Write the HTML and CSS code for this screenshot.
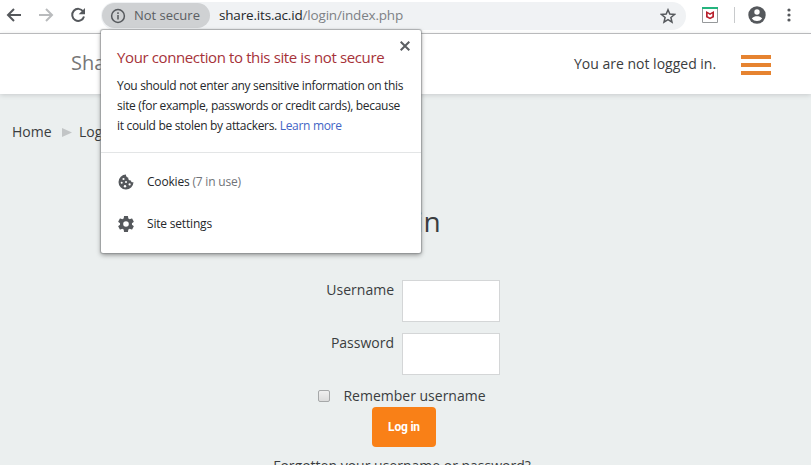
FILE: index.html
```html
<!DOCTYPE html>
<html lang="en">
<head>
<meta charset="utf-8">
<title>Log in</title>
<link rel="stylesheet" href="styles.css">
</head>
<body>
<div class="toolbar">
  <svg class="nav" viewBox="0 0 16 16"><path d="M15 8H2M8 2L2 8l6 6"/></svg>
  <svg class="nav forward" viewBox="0 0 16 16"><path d="M1 8h13M8 2l6 6-6 6"/></svg>
  <svg class="nav reload" viewBox="0 0 16 16"><path d="M13.2 4.5A6 6 0 1 0 14 9.5"/><path class="solid" d="M15 1v6.3H8.7z"/></svg>
  <div class="omnibox">
    <div class="chip">
      <svg class="info" viewBox="0 0 16 16"><circle cx="8" cy="8" r="6.4"/><path d="M8 7v4.5M8 4.2v1.7"/></svg>
      <span class="chip-text">Not secure</span>
    </div>
    <div class="url">share.its.ac.id<span class="path">/login/index.php</span></div>
    <svg class="star" viewBox="0 0 16 16"><path d="M8 1.8l1.8 4.3 4.7.4-3.6 3 1.1 4.6L8 11.7 4 14.1l1.1-4.6-3.6-3 4.7-.4z"/></svg>
  </div>
  <svg class="shield" viewBox="0 0 16 16"><path class="frame" d="M.5.5h15v15H.5z"/><path class="band" d="M0 0h16v2H0z"/><path class="mark" d="M4 4l4 2.3L12 4v6.2L8 12.3l-4-2.1zM5.7 6.4v2.9L8 10.5l2.3-1.2V6.4L8 7.9z"/></svg>
  <div class="divider"></div>
  <svg class="avatar" viewBox="0 0 18 18"><circle cx="9" cy="9" r="8.7"/><circle class="hole" cx="9" cy="6" r="2.7"/><path class="hole" d="M3.8 12.4C5 10.7 7.3 10.2 9 10.2s4 .5 5.2 2.2A6.3 6.3 0 0 1 9 15a6.3 6.3 0 0 1-5.200-2.600z"/></svg>
  <svg class="more" viewBox="0 0 4 14"><circle cx="2" cy="2" r="1.6"/><circle cx="2" cy="7" r="1.6"/><circle cx="2" cy="12" r="1.6"/></svg>
</div>
<header class="site-header">
  <div class="brand">Share</div>
  <div class="login-state">You are not logged in.</div>
  <div class="menu"><i></i><i></i><i></i></div>
</header>
<main>
  <nav class="crumbs"><span class="home">Home</span><svg class="arrow" viewBox="0 0 10 9"><path d="M0 0l10 4.500L0 9z"/></svg><span>Log in</span></nav>
  <h1>Log in</h1>
  <form class="login">
    <div class="row"><label class="user" for="u">Username</label><input id="u" class="field" type="text"></div>
    <div class="row"><label class="pass" for="p">Password</label><input id="p" class="field" type="password"></div>
    <div class="remember"><input id="r" class="check" type="checkbox"><label for="r">Remember username</label></div>
    <button type="button" class="submit">Log in</button>
    <div class="forgot">Forgotten your username or password?</div>
  </form>
</main>
<section class="popup">
  <svg class="close" viewBox="0 0 10 10"><path d="M.7.700l8.600 8.600M9.300.700L.700 9.300"/></svg>
  <div class="message">
    <h2>Your connection to this site is not secure</h2>
    <p>You should not enter any sensitive information on this<br>site (for example, passwords or credit cards), because<br>it could be stolen by attackers. <span class="link">Learn more</span></p>
  </div>
  <div class="options">
    <div class="option"><svg class="icon" viewBox="0 0 16 16"><path d="M8 .5A7.500 7.500 0 1 0 15.500 8.300c-1.500.300-2.500-.600-2.500-1.900-1.900.2-3-1-2.700-2.700C8.600 3.400 7.800 2.200 8 .5z"/><g class="hole"><circle cx="5.500" cy="5" r="1.100"/><circle cx="3.700" cy="8.700" r="1"/><circle cx="8" cy="8" r="1"/><circle cx="7" cy="12.300" r="1.200"/><circle cx="11.600" cy="10.400" r="1.100"/></g></svg><span>Cookies <span class="count">(7 in use)</span></span></div>
    <div class="option"><svg class="icon" viewBox="2 2 20 20"><path fill-rule="evenodd" d="M19.430 12.980c.040-.320.070-.640.070-.980s-.030-.660-.070-.980l2.110-1.650c.190-.150.240-.420.120-.640l-2-3.460c-.120-.220-.390-.300-.610-.220l-2.490 1c-.520-.400-1.080-.730-1.690-.980l-.380-2.650C14.460 2.180 14.250 2 14 2h-4c-.250 0-.460.180-.490.420l-.380 2.650c-.610.250-1.170.590-1.690.980l-2.490-1c-.230-.090-.490 0-.610.220l-2 3.460c-.130.220-.070.490.120.640l2.110 1.650c-.040.320-.070.650-.070.980s.030.660.070.980l-2.110 1.650c-.190.150-.240.420-.120.640l2 3.460c.120.220.390.300.610.220l2.490-1c.520.400 1.080.730 1.690.980l.380 2.650c.030.240.240.420.490.420h4c.250 0 .460-.180.490-.420l.380-2.650c.610-.250 1.170-.590 1.690-.980l2.490 1c.230.090.490 0 .610-.220l2-3.460c.120-.220.070-.490-.120-.640zM12 15.500a3.500 3.500 0 1 1 0-7 3.500 3.500 0 0 1 0 7z"/></svg><span>Site settings</span></div>
  </div>
</section>
</body>
</html>
```
FILE: styles.css
```css
* { box-sizing: border-box; }
body { margin: 0; width: 811px; height: 465px; overflow: hidden; position: relative; background: #ebefef; color: #3a3d40; font: 14px/20px "Open Sans", sans-serif; }
svg { display: block; flex: none; }
.toolbar { display: flex; align-items: center; height: 34px; padding: 0 0 4px 6px; background: #fff; border-bottom: 1px solid #b4b4b6; }
.nav { width: 16px; height: 16px; margin-right: 16px; fill: none; stroke: #55585c; stroke-width: 2; }
.forward { stroke: #b9bbbd; }
.reload { margin-right: 15px; }
.solid { fill: #55585c; stroke: none; }
.omnibox { display: flex; align-items: center; width: 585px; height: 28px; margin-top: 2px; border-radius: 14px; background: #f0f2f4; }
.chip { display: flex; align-items: center; width: 108px; height: 25px; margin-left: 1px; border-radius: 13px; background: #cfd1d3; }
.info { width: 16px; height: 16px; margin-left: 8px; fill: none; stroke: #55585c; stroke-width: 1.5; }
.chip-text { margin: -2px 0 0 8px; color: #5b5e62; font-size: 13px; white-space: nowrap; }
.url { flex: 1; margin: -2px 0 0 9px; color: #24272a; font-size: 13.500px; letter-spacing: -.18px; white-space: nowrap; }
.path { color: #7d8185; }
.star { width: 16px; height: 16px; margin-right: 10px; fill: none; stroke: #55585c; stroke-width: 1.500; }
.shield { width: 16px; height: 16px; margin-left: 16px; }
.frame { fill: #fff; stroke: #96999b; }
.band { fill: #24b47e; }
.mark { fill: #b8202c; fill-rule: evenodd; }
.divider { width: 1px; height: 16px; margin-left: 16px; background: #c8cacc; }
.avatar { width: 18px; height: 18px; margin-left: 13px; fill: #55585c; }
.hole { fill: #fff; }
.more { width: 4px; height: 14px; margin-left: 21px; fill: #55585c; }
.site-header { display: flex; align-items: center; height: 60px; padding-left: 71px; background: #fff; box-shadow: 0 1px 5px #c6cacb; }
.brand { width: 503px; color: #777; font-size: 20px; margin-top: -2px; }
.login-state { width: 167px; font-size: 14px; white-space: nowrap; }
.menu { display: flex; flex-direction: column; gap: 4px; width: 30px; margin-top: 2px; }
.menu i { height: 4px; background: #e68330; }
.crumbs { display: flex; align-items: center; padding: 28px 0 0 12px; }
.home { width: 50px; }
.arrow { width: 10px; height: 9px; margin-right: 7px; fill: #c2c5c6; }
h1 { width: 803px; margin: 59px 0 0; font-size: 28px; line-height: 40px; font-weight: 400; text-align: center; }
.login { display: flex; flex-direction: column; align-items: center; width: 808px; padding-top: 39px; }
.row { display: grid; grid-template-columns: 394px 98px; column-gap: 8px; width: 808px; height: 42px; margin-bottom: 11px; text-align: right; }
.field { width: 98px; height: 42px; border: 1px solid #d4d6d7; background: #fff; padding: 0; }
.remember { display: flex; align-items: center; height: 20px; margin: 0 0 1px -5px; }
.check { appearance: none; width: 12px; height: 12px; margin: -1px 13px 0 1px; border: 1px solid #a6a8a9; border-radius: 2px; background: linear-gradient(#f0f0f0, #dcdcdc); }
.submit { width: 64px; height: 40px; padding: 0; border: 0; border-radius: 4px; background: #f98017; color: #fff; font: 700 12px/20px Roboto, sans-serif; letter-spacing: -.2px; }
.forgot { width: 804px; margin: 9px 4px 0 0; text-align: center; }
.popup { position: absolute; left: 101px; top: 30px; width: 320px; height: 223px; border-radius: 2px; background: #fff; color: #25282b; box-shadow: 0 0 1px 1px #85888a99, 0 2px 5px #0006; font: 12px/20px "Open Sans", sans-serif; white-space: nowrap; }
.close { position: absolute; right: 11px; top: 11px; width: 10px; height: 10px; stroke: #5b5e62; stroke-width: 2; }
.message { height: 123px; padding: 17px 16px 0; border-bottom: 1px solid #e3e5e6; }
h2 { margin: 0; color: #a63239; font-size: 15px; line-height: 20px; font-weight: 400; letter-spacing: -.38px; }
p { margin: 9px 0 0; letter-spacing: -.31px; }
.link { color: #4265c5; }
.options { padding-top: 19px; letter-spacing: -.19px; }
.option { display: flex; align-items: center; height: 20px; margin-bottom: 22px; padding-left: 17px; }
.icon { width: 16px; height: 16px; margin-right: 13px; fill: #55585c; }
.count { color: #707378; }
```
